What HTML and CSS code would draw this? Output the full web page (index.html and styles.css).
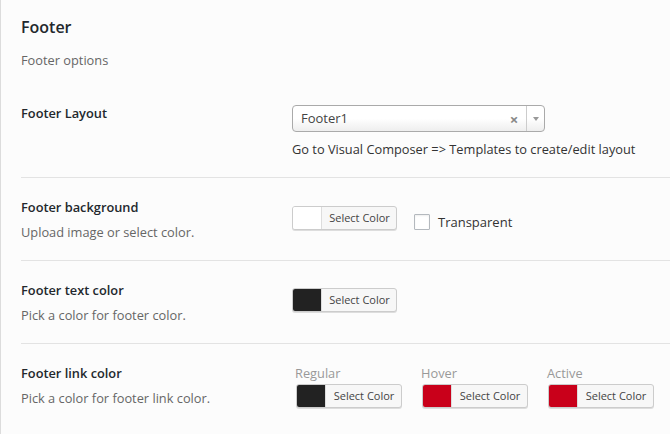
FILE: index.html
```html
<!DOCTYPE html>
<html lang="en">
<head>
<meta charset="utf-8">
<title>Footer options</title>
<link rel="stylesheet" href="styles.css">
</head>
<body>
<div class="page">
  <header class="section-head">
    <h2 class="title">Footer</h2>
    <p class="subtitle">Footer options</p>
  </header>

  <div class="row">
    <div class="label-col">
      <div class="label">Footer Layout</div>
    </div>
    <div class="field-col">
      <div class="select">
        <span class="select-value">Footer1</span>
        <span class="select-clear">&#215;</span>
        <span class="select-arrow"><svg width="6" height="4" viewBox="0 0 6 4"><path d="M0 0h6L3 4z" fill="#999"/></svg></span>
      </div>
      <p class="help">Go to Visual Composer =&gt; Templates to create/edit layout</p>
    </div>
  </div>

  <div class="row">
    <div class="label-col">
      <div class="label">Footer background</div>
      <div class="desc">Upload image or select color.</div>
    </div>
    <div class="field-col">
      <div class="inline">
        <button class="color-btn"><span class="swatch swatch-white"></span><span class="color-text">Select Color</span></button>
        <label class="check"><span class="checkbox"></span><span>Transparent</span></label>
      </div>
    </div>
  </div>

  <div class="row">
    <div class="label-col">
      <div class="label">Footer text color</div>
      <div class="desc">Pick a color for footer color.</div>
    </div>
    <div class="field-col">
      <button class="color-btn"><span class="swatch swatch-dark"></span><span class="color-text">Select Color</span></button>
    </div>
  </div>

  <div class="row">
    <div class="label-col">
      <div class="label">Footer link color</div>
      <div class="desc">Pick a color for footer link color.</div>
    </div>
    <div class="field-col">
      <div class="color-group">
        <div class="color-item">
          <div class="item-label">Regular</div>
          <button class="color-btn color-btn-lg"><span class="swatch swatch-dark"></span><span class="color-text">Select Color</span></button>
        </div>
        <div class="color-item">
          <div class="item-label">Hover</div>
          <button class="color-btn color-btn-lg"><span class="swatch swatch-red"></span><span class="color-text">Select Color</span></button>
        </div>
        <div class="color-item">
          <div class="item-label">Active</div>
          <button class="color-btn color-btn-lg"><span class="swatch swatch-red"></span><span class="color-text">Select Color</span></button>
        </div>
      </div>
    </div>
  </div>
</div>
</body>
</html>
```

FILE: styles.css
```css
* { box-sizing: border-box; }

html, body {
  margin: 0;
  padding: 0;
}

body {
  background: #fcfcfc;
  font-family: "Open Sans", "Liberation Sans", sans-serif;
  font-size: 12.8px;
  color: #333;
  border-left: 1px solid #dcdcdc;
  min-height: 434px;
  overflow: hidden;
}

.page {
  padding-left: 20px;
}

.section-head {
  padding-top: 16px;
  padding-bottom: 15px;
}

.title {
  margin: 0;
  font-size: 16px;
  line-height: 22px;
  font-weight: 600;
  color: #23282d;
}

.subtitle {
  margin: 13px 0 0;
  line-height: 18px;
  color: #666;
}

.row {
  display: grid;
  grid-template-columns: 271px 1fr;
  padding: 20px 0 19px;
  border-bottom: 1px solid #e3e3e3;
}

.row:last-child {
  border-bottom: none;
}

.label {
  font-weight: 600;
  line-height: 18px;
  color: #23282d;
}

.desc {
  margin-top: 7px;
  line-height: 18px;
  color: #666;
}

.field-col {
  padding-top: 1px;
}

.select {
  display: flex;
  align-items: center;
  width: 253px;
  height: 27px;
  border: 1px solid #aaa;
  border-radius: 4px;
  background: linear-gradient(#ffffff 50%, #eeeeee);
  color: #444;
}

.select-value {
  flex: 1;
  padding-left: 8px;
  font-size: 13px;
  line-height: 25px;
}

.select-clear {
  width: 14px;
  margin-right: 5px;
  font-size: 15px;
  font-weight: 700;
  color: #888;
  text-align: center;
}

.select-arrow {
  display: flex;
  align-items: center;
  justify-content: center;
  width: 18px;
  height: 100%;
  border-left: 1px solid #ccc;
}

.help {
  margin: 8px 0 0;
  line-height: 18px;
  color: #333;
}

.inline {
  display: flex;
  align-items: center;
  margin-top: 6px;
}

.field-col > .color-btn {
  margin-top: 6px;
}

.color-btn {
  display: flex;
  align-items: stretch;
  width: 105px;
  height: 24px;
  padding: 0;
  border: 1px solid #ccc;
  border-radius: 3px;
  background: #f7f7f7;
  box-shadow: 0 1px 0 #ddd;
  font-family: inherit;
  overflow: hidden;
  cursor: pointer;
}

.color-btn-lg {
  width: 106px;
}

.swatch {
  width: 29px;
  flex: none;
  border-right: 1px solid #ddd;
}

.swatch-white { background: #ffffff; }
.swatch-dark { background: #222222; }
.swatch-red { background: #c9001a; }

.color-text {
  flex: 1;
  padding-left: 1px;
  font-size: 11px;
  line-height: 22px;
  color: #444;
  text-align: center;
}

.check {
  display: flex;
  align-items: center;
  margin-left: 17px;
  margin-top: 8px;
  gap: 8px;
  font-size: 13px;
  color: #333;
}

.checkbox {
  width: 16px;
  height: 16px;
  border: 1px solid #b4b9be;
  background: #fff;
  border-radius: 1px;
  box-shadow: inset 0 1px 2px rgba(0,0,0,0.07);
}

.color-group {
  display: flex;
  gap: 20px;
  margin-left: 4px;
  margin-top: -1px;
}

.item-label {
  margin-left: -1px;
  line-height: 18px;
  color: #999;
  margin-bottom: 2px;
}
```
